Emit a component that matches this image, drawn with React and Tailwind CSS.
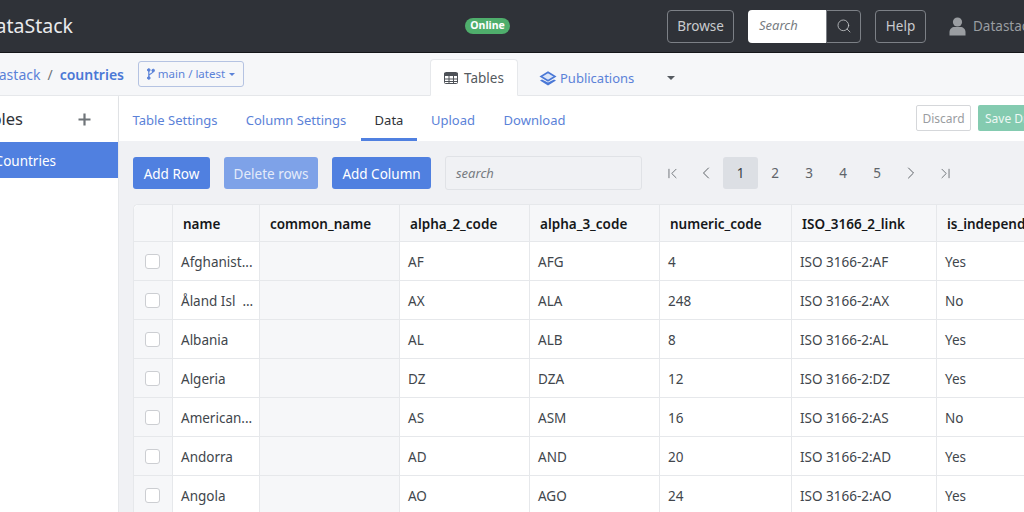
import React from 'react'
import { Search, ChevronLeft, ChevronRight, ChevronFirst, ChevronLast } from 'lucide-react'

const rows = [
    ['Afghanist...', 'AF', 'AFG', '4', 'ISO 3166-2:AF', 'Yes'],
    ['Åland Isl  ...', 'AX', 'ALA', '248', 'ISO 3166-2:AX', 'No'],
    ['Albania', 'AL', 'ALB', '8', 'ISO 3166-2:AL', 'Yes'],
    ['Algeria', 'DZ', 'DZA', '12', 'ISO 3166-2:DZ', 'Yes'],
    ['American...', 'AS', 'ASM', '16', 'ISO 3166-2:AS', 'No'],
    ['Andorra', 'AD', 'AND', '20', 'ISO 3166-2:AD', 'Yes'],
    ['Angola', 'AO', 'AGO', '24', 'ISO 3166-2:AO', 'Yes'],
]

const headers = [
    ['name', 'w-[87px]'],
    ['common_name', 'w-[140px]'],
    ['alpha_2_code', 'w-[130px]'],
    ['alpha_3_code', 'w-[130px]'],
    ['numeric_code', 'w-[132px]'],
    ['ISO_3166_2_link', 'w-[145px]'],
    ['is_independent', 'w-[120px]'],
]

const App = () => {
    return (
        <div className="w-[1024px] h-[512px] overflow-hidden bg-white text-[13.5px] text-[#41464c]" style={{ fontFamily: '"Noto Sans", sans-serif' }}>
            {/* top bar */}
            <div className="h-[53px] bg-[#2f3238] border-b border-b-[#15171a] flex items-center [&>*]:shrink-0">
                <div className="w-[73px] flex justify-end">
                    <span className="text-[19.5px] text-[#e9eaec] whitespace-nowrap">DataStack</span>
                </div>
                <span className="ml-[392px] w-[45px] bg-[#4fae6c] text-white text-[10.5px] font-bold rounded-full h-[16px] flex items-center justify-center">Online</span>
                <button className="ml-[157px] h-[33px] w-[67px] border border-[#7c8086] rounded-[4px] text-[#c9cbce]">Browse</button>
                <div className="ml-[14px] flex h-[33px]">
                    <div className="w-[78px] bg-white rounded-l-[4px] flex items-center pl-[11px] italic text-[13px] text-[#777c82]">Search</div>
                    <div className="w-[35px] border border-[#7c8086] rounded-r-[4px] flex items-center justify-center">
                        <Search size={16} strokeWidth={1.2} className="text-[#c9cbce]" />
                    </div>
                </div>
                <button className="ml-[14px] h-[33px] w-[51px] border border-[#7c8086] rounded-[4px] text-[#c9cbce]">Help</button>
                <svg width="17" height="19" viewBox="0 0 17 19" className="ml-[23px]">
                    <circle cx="8.5" cy="5" r="4.6" fill="#9a9da1" />
                    <path d="M0.5 18.5v-3.5c0-3 2.5-5 5-5h6c2.5 0 5 2 5 5v3.5z" fill="#9a9da1" />
                </svg>
                <span className="ml-[7px] text-[#9a9da1] whitespace-nowrap">Datastack</span>
            </div>

            {/* breadcrumb row */}
            <div className="h-[43px] bg-[#f6f7f9] border-b border-b-[#e6e8eb] flex items-center [&>*]:shrink-0">
                <div className="w-[124px] flex justify-end text-[14px] whitespace-nowrap">
                    <span className="text-[#5b82d8]">datastack</span>
                    <span className="text-[#6f7479] mx-[7px]">/</span>
                    <span className="text-[#4a78d6] font-semibold">countries</span>
                </div>
                <button className="ml-[14px] h-[26px] w-[106px] border border-[#b5c3e2] rounded-[3px] text-[#5b82d8] text-[11.5px] flex items-center justify-center gap-[3px]">
                    <svg width="8" height="12" viewBox="0 0 8 12" fill="none" stroke="#5b82d8">
                        <circle cx="1.8" cy="2" r="1.3" fill="#5b82d8" />
                        <circle cx="1.8" cy="10" r="1.3" fill="#5b82d8" />
                        <circle cx="6.2" cy="2.5" r="1.3" fill="#5b82d8" />
                        <path d="M1.8 2v8M6.2 3c0 3-4.4 2.5-4.4 5" strokeWidth="1.2" />
                    </svg>
                    main / latest
                    <span className="ml-[1px] border-x-[3px] border-x-transparent border-t-[3px] border-t-[#5b82d8]"></span>
                </button>
                <div className="ml-[186px] self-end h-[37px] w-[88px] bg-white border border-[#e6e8eb] border-b-white rounded-t-[4px] flex items-center justify-center gap-[6px] pt-[1px] mb-[-1px]">
                    <svg width="14" height="12" viewBox="0 0 14 12" fill="none" stroke="#4d5157" strokeWidth="1">
                        <rect x="0.5" y="0.5" width="13" height="11" rx="1" />
                        <path d="M0.5 1.5h13v2h-13z" fill="#4d5157" />
                        <path d="M0.5 7h13M0.5 9.5h13M5 3.5v8M9.5 3.5v8" />
                    </svg>
                    <span className="text-[#555a60]">Tables</span>
                </div>
                <div className="self-end h-[36px] w-[149px] flex items-center pl-[21px] pt-[3px] gap-[3px] text-[13px] text-[#5b82d8] whitespace-nowrap">
                    <svg width="18" height="15" viewBox="0 0 18 15" className="shrink-0">
                        <path d="M1 9.5l2-1 6 3 6-3 2 1-8 5z" fill="#4a78d6" />
                        <path d="M9 1.2l7 4.3-7 4.3-7-4.3z" fill="#dbe5f8" stroke="#4a78d6" strokeWidth="1.6" />
                    </svg>
                    <span>Publications</span>
                </div>
                <span className="mt-[8px] border-x-[4px] border-x-transparent border-t-[4px] border-t-[#555a60]"></span>
            </div>

            <div className="flex h-[416px]">
                {/* sidebar */}
                <div className="w-[119px] shrink-0 border-r border-r-[#e6e8eb]">
                    <div className="h-[46px] flex items-center">
                        <div className="w-[23px] flex justify-end">
                            <span className="text-[16.5px] text-[#2f3238]">Tables</span>
                        </div>
                        <svg width="13" height="13" viewBox="0 0 13 13" className="ml-[55px]">
                            <path d="M6.5 0.5v12M0.5 6.5h12" stroke="#6f7479" strokeWidth="2.2" />
                        </svg>
                    </div>
                    <div className="h-[36px] bg-[#5080e0] text-white flex items-center pt-[2px]">
                        <div className="w-[56px] flex justify-end">
                            <span>Countries</span>
                        </div>
                    </div>
                </div>

                <div className="flex-1 min-w-0">
                    {/* sub tabs */}
                    <div className="h-[45px] bg-white shadow-[0_1px_2px_rgba(0,0,0,0.08)] flex pl-[14px] text-[13px] text-[#5b82d8] whitespace-nowrap [&>*]:shrink-0">
                        <span className="h-[45px] w-[84px] flex items-center justify-center pt-[5px]">Table Settings</span>
                        <span className="h-[45px] w-[102px] ml-[28px] flex items-center justify-center pt-[5px]">Column Settings</span>
                        <span className="h-[45px] w-[56px] ml-[14px] flex items-center justify-center pt-[8px] text-[#2f3238] border-b-[3px] border-b-[#5080e0]">Data</span>
                        <span className="h-[45px] w-[44px] ml-[14px] flex items-center justify-center pt-[5px]">Upload</span>
                        <span className="h-[45px] w-[63px] ml-[28px] flex items-center justify-center pt-[5px]">Download</span>
                        <button className="ml-[350px] mt-[9px] h-[26px] w-[55px] pt-[1px] border border-[#d5d7da] rounded-[2px] text-[12px] text-[#9a9da1]">Discard</button>
                        <button className="ml-[7px] mt-[9px] h-[26px] w-[80px] pt-[1px] bg-[#84cbb0] rounded-[2px] text-[12px] text-[#eef8f4] text-left pl-[7px]">Save Draft</button>
                    </div>

                    <div className="bg-[#f0f1f4] h-[371px] overflow-hidden pl-[14px] pt-[16px] w-[905px]">
                        {/* toolbar */}
                        <div className="flex items-center h-[32px] whitespace-nowrap [&>*]:shrink-0">
                            <button className="h-[32px] w-[77px] pt-[2px] bg-[#5080e0] rounded-[3px] text-white">Add Row</button>
                            <button className="ml-[14px] h-[32px] w-[94px] pt-[2px] bg-[#7ea2e8] rounded-[3px] text-[#e4ebfa]">Delete rows</button>
                            <button className="ml-[14px] h-[32px] w-[99px] pt-[2px] bg-[#5080e0] rounded-[3px] text-white">Add Column</button>
                            <div className="ml-[14px] h-[34px] w-[197px] border border-[#e0e2e6] rounded-[3px] bg-[#f0f1f4] flex items-center pl-[10px] pt-[1px] italic text-[13px] text-[#777c82]">search</div>
                            <div className="ml-[13px] flex items-center text-[#5f6469]">
                                <span className="w-[34px] flex justify-center"><ChevronFirst size={17} strokeWidth={1.2} /></span>
                                <span className="w-[34px] flex justify-center"><ChevronLeft size={20} strokeWidth={1.2} /></span>
                                <span className="w-[35px] h-[32px] flex items-center justify-center bg-[#dcdfe4] rounded-[3px] text-[#3a3f45]">1</span>
                                <span className="w-[34px] text-center">2</span>
                                <span className="w-[34px] text-center">3</span>
                                <span className="w-[34px] text-center">4</span>
                                <span className="w-[34px] text-center">5</span>
                                <span className="w-[34px] flex justify-center"><ChevronRight size={20} strokeWidth={1.2} /></span>
                                <span className="w-[34px] flex justify-center"><ChevronLast size={17} strokeWidth={1.2} /></span>
                            </div>
                        </div>

                        {/* data table */}
                        <table className="mt-[15px] table-fixed border-separate border-spacing-0 w-[923px] bg-white rounded-t-[5px] border-t border-t-[#e6e8eb] border-l border-l-[#e6e8eb]">
                            <thead>
                                <tr className="h-[37px] bg-[#f6f7f9] text-left text-[#15171a]">
                                    <th className="w-[38px] rounded-tl-[5px] border-b border-b-[#e6e8eb]"></th>
                                    {headers.map(([h, w]) => (
                                        <th key={h} className={`${w} pl-[10px] pt-[2px] text-[13.5px] font-semibold whitespace-nowrap overflow-hidden border-l border-l-[#e6e8eb] border-b border-b-[#e6e8eb]`}>{h}</th>
                                    ))}
                                </tr>
                            </thead>
                            <tbody>
                                {rows.map((r) => (
                                    <tr key={r[1]} className="h-[39px]">
                                        <td className="bg-[#f6f7f9] border-b border-b-[#e6e8eb]">
                                            <div className="w-[15px] h-[15px] ml-[11px] bg-white border border-[#ccced2] rounded-[3px]"></div>
                                        </td>
                                        <td className="pl-[8px] pt-[3px] whitespace-pre overflow-hidden border-l border-l-[#e6e8eb] border-b border-b-[#e6e8eb]">{r[0]}</td>
                                        <td className="bg-[#f6f7f9] border-l border-l-[#e6e8eb] border-b border-b-[#e6e8eb]"></td>
                                        {r.slice(1).map((c, i) => (
                                            <td key={i} className="pl-[8px] pt-[3px] whitespace-nowrap border-l border-l-[#e6e8eb] border-b border-b-[#e6e8eb]">{c}</td>
                                        ))}
                                    </tr>
                                ))}
                            </tbody>
                        </table>
                    </div>
                </div>
            </div>
        </div>
    )
}

export default App
